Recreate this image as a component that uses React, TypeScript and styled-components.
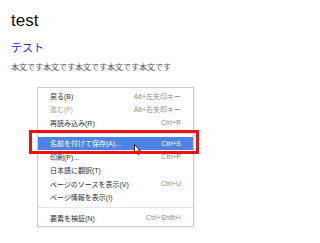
import { FC } from "react";
import styled, { createGlobalStyle } from "styled-components";

const GlobalStyle = createGlobalStyle`
  html, body {
    margin: 0;
    padding: 0;
    background: #fff;
  }
  body {
    font-family: "Liberation Sans", "Noto Sans CJK JP", sans-serif;
  }
`;

const Page = styled.div`
  width: 208px;
  height: 243px;
  padding: 11px 0 0 11px;
  box-sizing: border-box;
  overflow: hidden;
`;

const Title = styled.h1`
  margin: 0;
  font-size: 17px;
  line-height: 20px;
  font-weight: normal;
  color: #111;
`;

const SubLink = styled.a`
  display: block;
  margin-top: 10px;
  font-size: 11px;
  line-height: 14px;
  color: #1a1aff;
  text-decoration: none;
`;

const BodyText = styled.p`
  margin: 8px 0 0;
  font-size: 8px;
  line-height: 10px;
  color: #555;
  white-space: nowrap;
`;

const Menu = styled.ul`
  list-style: none;
  margin: 14px 0 0 26px;
  padding: 1px 0;
  width: 157px;
  box-sizing: border-box;
  background: #fff;
  border: 1px solid #cfcfcf;
  box-shadow: 1px 1px 2px rgba(0, 0, 0, 0.08);
`;

const Item = styled.li<{ $active?: boolean; $disabled?: boolean }>`
  position: relative;
  display: flex;
  align-items: center;
  justify-content: space-between;
  height: 13.5px;
  padding: 0 12px 0 12px;
  font-size: 7px;
  white-space: nowrap;
  color: ${(p) => (p.$active ? "#fff" : p.$disabled ? "#aaa" : "#333")};
  background: ${(p) => (p.$active ? "#4c84e6" : "transparent")};

  ${(p) =>
    p.$active &&
    `
    &::after {
      content: "";
      position: absolute;
      top: -7px;
      bottom: -4px;
      left: -9px;
      right: -6px;
      border: 3px solid #ee1111;
      pointer-events: none;
    }
  `}
`;

const Shortcut = styled.span<{ $active?: boolean }>`
  color: ${(p) => (p.$active ? "#fff" : "#8c8c8c")};
`;

const Separator = styled.li`
  height: 1px;
  margin: 3px 0;
  background: #e6e6e6;
`;

const Cursor = styled.svg`
  position: absolute;
  left: 96px;
  top: 7px;
  width: 7px;
  height: 11px;
`;

type Entry =
  | { sep: true }
  | { label: string; key?: string; active?: boolean; disabled?: boolean };

const entries: Entry[] = [
  { label: "戻る(B)", key: "Alt+左矢印キー" },
  { label: "進む(F)", key: "Alt+右矢印キー", disabled: true },
  { label: "再読み込み(R)", key: "Ctrl+R" },
  { sep: true },
  { label: "名前を付けて保存(A)...", key: "Ctrl+S", active: true },
  { label: "印刷(P)...", key: "Ctrl+P" },
  { label: "日本語に翻訳(T)" },
  { label: "ページのソースを表示(V)", key: "Ctrl+U" },
  { label: "ページ情報を表示(I)" },
  { sep: true },
  { label: "要素を検証(N)", key: "Ctrl+Shift+I" },
];

const App: FC = () => {
  return (
    <>
      <GlobalStyle />
      <Page>
        <Title>test</Title>
        <SubLink href="#">テスト</SubLink>
        <BodyText>本文です本文です本文です本文です本文です</BodyText>
        <Menu>
          {entries.map((e, i) =>
            "sep" in e ? (
              <Separator key={i} />
            ) : (
              <Item key={i} $active={e.active} $disabled={e.disabled}>
                <span>{e.label}</span>
                {e.key && <Shortcut $active={e.active}>{e.key}</Shortcut>}
                {e.active && (
                  <Cursor viewBox="0 0 7 11">
                    <path
                      d="M0.5 0.5 L0.5 9 L2.5 7.2 L4 10.5 L5.2 10 L3.8 6.8 L6.3 6.8 Z"
                      fill="#fff"
                      stroke="#000"
                      strokeWidth="0.8"
                      strokeLinejoin="round"
                    />
                  </Cursor>
                )}
              </Item>
            )
          )}
        </Menu>
      </Page>
    </>
  );
};

export default App;
